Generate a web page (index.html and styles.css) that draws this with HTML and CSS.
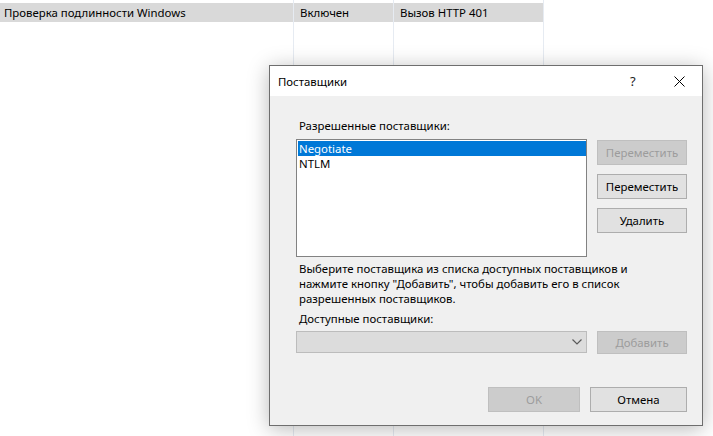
FILE: index.html
```html
<!DOCTYPE html>
<html lang="ru">
<head>
  <meta charset="UTF-8" />
  <title>Поставщики</title>
  <link rel="stylesheet" href="styles.css">
</head>
<body>
  <div class="listview">
    <div class="col col-name"><div class="cell">Проверка подлинности Windows</div></div>
    <div class="col col-state"><div class="cell">Включен</div></div>
    <div class="col col-type"><div class="cell">Вызов HTTP 401</div></div>
  </div>

  <div class="dialog">
    <div class="titlebar">
      <span class="title">Поставщики</span>
      <span class="help">?</span>
      <span class="close">
        <svg width="11" height="11" viewBox="0 0 11 11"><path d="M0.5 0.5 L10.5 10.5 M10.5 0.5 L0.5 10.5" stroke="#000" stroke-width="1" fill="none"/></svg>
      </span>
    </div>
    <div class="body">
      <div class="label first">Разрешенные поставщики:</div>
      <div class="main">
        <div class="listbox">
          <div class="item selected">Negotiate</div>
          <div class="item">NTLM</div>
        </div>
        <div class="side">
          <button class="btn" disabled>Переместить</button>
          <button class="btn">Переместить</button>
          <button class="btn">Удалить</button>
        </div>
      </div>
      <p class="hint">Выберите поставщика из списка доступных поставщиков и<br>нажмите кнопку "Добавить", чтобы добавить его в список<br>разрешенных поставщиков.</p>
      <div class="label">Доступные поставщики:</div>
      <div class="main">
        <div class="combo">
          <svg width="10" height="6" viewBox="0 0 10 6"><path d="M0.5 0.5 L5 5 L9.5 0.5" stroke="#5a5a5a" stroke-width="1.2" fill="none"/></svg>
        </div>
        <div class="side">
          <button class="btn add" disabled>Добавить</button>
        </div>
      </div>
      <div class="footer">
        <button class="btn ok" disabled>OK</button>
        <button class="btn cancel">Отмена</button>
      </div>
    </div>
  </div>
</body>
</html>
```

FILE: styles.css
```css
* {
  margin: 0;
  padding: 0;
  box-sizing: border-box;
}
body {
  background: #fff;
  color: #000;
  font-family: 'Noto Sans', 'Open Sans', sans-serif;
  font-size: 11.4px;
  height: 436px;
  overflow: hidden;
}
.listview {
  display: flex;
  height: 436px;
}
.col {
  border-right: 1px solid #e6ebf2;
  padding-top: 3px;
}
.col-name { width: 294px; }
.col-state { width: 100px; }
.col-type { width: 150px; }
.cell {
  height: 19px;
  line-height: 19px;
  background: #d9d9d9;
  padding-left: 4px;
  white-space: nowrap;
}
.col-state .cell,
.col-type .cell {
  padding-left: 6px;
}
.dialog {
  position: absolute;
  left: 269px;
  top: 65px;
  width: 434px;
  height: 361px;
  border: 1px solid #6e6e6e;
  background: #f0f0f0;
  box-shadow: 0 3px 20px rgba(0, 0, 0, 0.28);
}
.titlebar {
  height: 30px;
  background: #fff;
  display: flex;
  align-items: center;
  padding-left: 8px;
}
.title {
  flex-grow: 1;
}
.help {
  width: 12px;
  font-size: 13px;
  color: #222;
  margin-right: 32px;
}
.close {
  display: flex;
  margin-right: 17px;
}
.body {
  padding: 22px 15px 0 26px;
}
.label {
  line-height: 16px;
  padding-left: 3px;
  margin-bottom: 5px;
}
.main {
  display: flex;
  gap: 10px;
}
.listbox {
  width: 291px;
  height: 118px;
  background: #fff;
  border: 1px solid #828282;
  padding: 1px 0 0 1px;
}
.item {
  height: 15px;
  line-height: 15px;
  padding-left: 1px;
}
.item.selected {
  background: #0078d7;
  color: #fff;
}
.side {
  display: flex;
  flex-direction: column;
  gap: 9px;
  padding-top: 1px;
}
.btn {
  width: 90px;
  height: 25px;
  background: #e1e1e1;
  border: 1px solid #adadad;
  font-family: inherit;
  font-size: 11.4px;
  color: #000;
}
.btn:disabled {
  background: #cccccc;
  border-color: #bfbfbf;
  color: #9c9c9c;
}
.hint {
  margin-top: 4px;
  padding-left: 3px;
  line-height: 15px;
  white-space: nowrap;
}
.hint + .label {
  margin-top: 5px;
  margin-bottom: 4px;
}
.combo {
  width: 291px;
  height: 22px;
  background: #dcdcdc;
  border: 1px solid #bcbcbc;
  display: flex;
  justify-content: flex-end;
  align-items: center;
  padding-right: 4px;
}
.btn.add {
  height: 23px;
  margin-top: -1px;
}
.footer {
  display: flex;
  justify-content: flex-end;
  gap: 10px;
  margin-top: 33px;
}
.btn.ok { width: 92px; }
.btn.cancel { width: 97px; }
```
